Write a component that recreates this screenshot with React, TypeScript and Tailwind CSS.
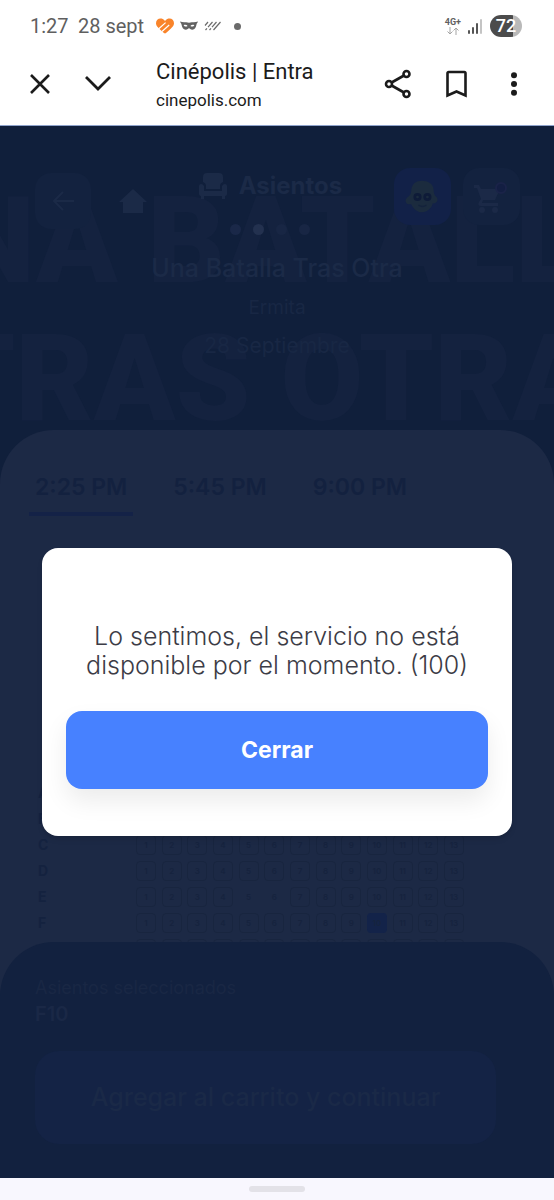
import { useState } from 'react'
import type { FC } from 'react'

const SHOWTIMES = ['2:25 PM', '5:45 PM', '9:00 PM']
const ROWS = ['A', 'B', 'C', 'D', 'E', 'F', 'G']
const SEATS = Array.from({ length: 13 }, (_, i) => i + 1)
const ACCESSIBLE = ['E5', 'E6']

const StatusBar: FC = () => (
  <div className="flex h-[52px] items-center justify-between pl-[30px] pr-8 text-xl text-[#5f5f5f]">
    <div className="flex items-center">
      <span className="w-12">1:27</span>
      <span>28 sept</span>
      <svg className="ml-3 h-4 w-[18px]" viewBox="0 0 18 16">
        <path d="M9 3C7.500 1 6 .5 4.500.5 2 .5 0 2.500 0 5.200c0 3 3 5.300 8 9.800q1 .8 2 0c5-4.500 8-6.800 8-9.800C18 2.500 16 .5 13.500.5 12 .5 10.500 1 9 3Z" fill="#f9842a" />
        <path d="M2.500 11 9.600 4.600M6 13.500 13.200 7" fill="none" stroke="#fff" strokeWidth="1.200" />
      </svg>
      <svg className="ml-1.5 h-[10px] w-[18px]" viewBox="0 0 18 10" fill="#626262">
        <path
          fillRule="evenodd"
          d="M0 .6c2.300 1 4.500.700 6.200.700 1.100 0 1.900.5 2.800.5s1.700-.5 2.800-.5c1.700 0 3.900.3 6.200-.7-.3 1.200-1.200 1.500-1.500 3-.5 3-1.800 5.100-4.200 5.100-1.900 0-2.400-1.500-3.300-1.500S7.600 8.700 5.700 8.700c-2.400 0-3.700-2.100-4.200-5.100C1.200 2.100.3 1.800 0 .6Zm3.600 3.600c.8 1.600 2.700 1.800 4 .7-.9-1.300-2.700-1.500-4-.7Zm6.800.7c1.300 1.100 3.200.9 4-.7-1.300-.8-3.100-.6-4 .7Z"
        />
      </svg>
      <svg className="ml-1.5 h-[10px] w-[18px]" viewBox="0 0 18 10" fill="none" stroke="#6b6b6b" strokeWidth="1.200">
        <path d="M1 4.500 4 1M1.500 9 3 7.300M4 6.200 8.500 1M5.500 9 7 7.300M8 6.200 12.500 1M9.500 9 16.500 1" />
      </svg>
      <span className="ml-3 size-[7px] rounded-full bg-[#6b6b6b]" />
    </div>
    <div className="flex items-center gap-[7px]">
      <div className="flex flex-col items-center">
        <span className="text-[9px] font-bold leading-[10px]">4G+</span>
        <svg className="h-2 w-3" viewBox="0 0 12 8" fill="none" stroke="#a5a5a5">
          <path d="M3 0v7M.5 4.500 3 7l2.500-2.500M9 8V1M6.500 3.500 9 1l2.500 2.500" />
        </svg>
      </div>
      <svg className="h-[15px] w-[15px]" viewBox="0 0 15 15" fill="#555">
        <rect x="0" y="11" width="2" height="4" rx="1" />
        <rect x="4" y="8" width="2" height="7" rx="1" />
        <rect x="8" y="4" width="2" height="11" rx="1" />
        <rect x="12" y="0" width="2" height="15" rx="1" fill="#c4c4c4" />
      </svg>
      <div className="flex h-[22px] w-8 items-center justify-center rounded-full bg-linear-to-r from-[#4b4b4b] from-72% to-[#b9b9b9] to-72% text-lg font-medium text-white">
        72
      </div>
    </div>
  </div>
)

const BrowserBar: FC = () => (
  <div className="flex h-[74px] items-center border-b border-[#8fa3cb] pb-[10px] pl-7 pr-7 text-[#1b1b1b]">
    <button aria-label="Cerrar pestaña" className="flex size-6 items-center justify-center">
      <svg className="size-5" viewBox="0 0 20 20" fill="none" stroke="currentColor" strokeWidth="2.600">
        <path d="M1 1 19 19M19 1 1 19" />
      </svg>
    </button>
    <button aria-label="Minimizar" className="ml-8 flex h-6 w-7 items-center justify-center">
      <svg className="h-[15px] w-[26px]" viewBox="0 0 26 15" fill="none" stroke="currentColor" strokeWidth="2.800">
        <path d="M1 1 13 13 25 1" />
      </svg>
    </button>
    <div className="ml-11 flex-1">
      <p className="text-[22px] leading-8">Cinépolis | Entra</p>
      <p className="text-[17px] leading-6">cinepolis.com</p>
    </div>
    <div className="flex items-center gap-[34px]">
      <button aria-label="Compartir">
        <svg className="h-[30px] w-7" viewBox="0 0 28 30" fill="none" stroke="currentColor" strokeWidth="2.600">
          <circle cx="5" cy="15" r="3" />
          <circle cx="22.500" cy="5" r="3" />
          <circle cx="22.500" cy="25" r="3" />
          <path d="M7.600 13.500 20 6.500M7.600 16.500 20 23.500" />
        </svg>
      </button>
      <button aria-label="Guardar">
        <svg className="h-7 w-[22px]" viewBox="0 0 22 28" fill="none" stroke="currentColor" strokeWidth="2.600">
          <path d="M1.500 3.200Q1.500 2 2.700 2H18.300Q19.500 2 19.500 3.200V25.500L10.500 21.500 1.500 25.500Z" />
        </svg>
      </button>
      <button aria-label="Más opciones">
        <svg className="h-6 w-6" viewBox="0 0 24 24" fill="currentColor">
          <circle cx="12" cy="3.300" r="3" />
          <circle cx="12" cy="12" r="3" />
          <circle cx="12" cy="20.700" r="3" />
        </svg>
      </button>
    </div>
  </div>
)

// Oversized movie title printed behind the header
const Poster: FC = () => (
  <div
    aria-hidden="true"
    className="absolute inset-0 overflow-hidden whitespace-pre pt-[46px] pr-5 font-['Roboto'] text-[120px] font-black leading-[138px] text-[#14223f]"
  >
    <p className="flex justify-center">UNA BATALLA</p>
    <p className="flex justify-center">TRAS OTRA</p>
  </div>
)

const MovieHeader: FC = () => (
  <header className="relative pt-[42px] pb-[70px] text-[#1b2a47]">
    <Poster />
    <div className="relative flex h-[68px] items-start justify-between pl-[35px] pr-[34px]">
      <div className="flex h-[66px] items-center gap-7">
        <button aria-label="Regresar" className="flex size-14 items-center justify-center rounded-2xl bg-[#13223f]">
          <svg className="h-5 w-[22px]" viewBox="0 0 22 20" fill="none" stroke="currentColor" strokeWidth="2">
            <path d="M22 10H2M11 1 2 10l9 9" />
          </svg>
        </button>
        <a href="#inicio" aria-label="Inicio">
          <svg className="h-6 w-7" viewBox="0 0 28 24" fill="currentColor">
            <path d="M14 0 28 13H24V24H4V13H0Z" />
          </svg>
        </a>
      </div>
      <div className="flex flex-col items-center gap-6 pt-1">
        <div className="flex h-7 items-center gap-3">
          <svg className="h-[26px] w-7" viewBox="0 0 28 26" fill="currentColor">
            <path d="M4 9V4q0-4 4-4H20q4 0 4 4V9q-3 1-3 4v3H7v-3q0-3-3-4Z" />
            <path d="M0 13q0-2 2-2t3 2v5H23v-5q1-2 3-2t2 2v8q0 2-2 2v3H23V23H5v3H2V23q-2 0-2-2Z" />
          </svg>
          <h1 className="text-2xl font-bold">Asientos</h1>
        </div>
        <div className="flex gap-3">
          <span className="size-[11px] rounded-full bg-[#1a2848]" />
          <span className="size-[11px] rounded-full bg-[#23314f]" />
          <span className="size-[11px] rounded-full bg-[#182644]" />
          <span className="size-[11px] rounded-full bg-[#182644]" />
        </div>
      </div>
      <div className="flex gap-3">
        <button aria-label="Perfil" className="flex size-[57px] items-center justify-center rounded-2xl bg-[#122148]">
          <svg className="size-9" viewBox="0 0 40 40" fill="#1b2b3e">
            <path d="M8 14C8 5 14 2 20 2s13 3 13 11c0 3 1 5 3 7 3 3 0 8-4 7-1 5-6 10-12 10S10 32 8 28c-5 1-8-3-5-7 3-2 5-4 5-7Z" />
            <circle cx="15" cy="20" r="4.500" fill="#0e1b38" />
            <circle cx="26" cy="20" r="4.500" fill="#0e1b38" />
            <circle cx="15" cy="20" r="1.500" />
            <circle cx="26" cy="20" r="1.500" />
            <path d="M16 29q4.500 3 9 0" fill="none" stroke="#14233c" strokeWidth="1.500" />
          </svg>
        </button>
        <button aria-label="Carrito" className="flex size-[57px] items-center justify-center rounded-2xl bg-[#13223f]">
          <svg className="h-8 w-[34px]" viewBox="0 0 34 32" fill="#1b2947">
            <path d="M0 4H5L7 8H26L21 19H9L8 22H24V25H7Q3 25 5 21L7 18 3 7H0Z" />
            <circle cx="8" cy="29" r="3" />
            <circle cx="21" cy="29" r="3" />
            <circle cx="27" cy="7" r="5" fill="#131e42" stroke="#1a2348" strokeWidth="2" />
          </svg>
        </button>
      </div>
    </div>
    <div className="relative text-center">
      <h2 className="mt-4 text-[25px] leading-8 font-medium">Una Batalla Tras Otra</h2>
      <p className="mt-3 text-[19px] leading-6 text-[#182744]">Ermita</p>
      <p className="mt-3 text-[21px] leading-7 text-[#182744]">28 Septiembre</p>
    </div>
  </header>
)

const SeatMap: FC = () => (
  <div className="min-h-0 flex-1 overflow-hidden pt-[267px]">
    <div className="flex flex-col gap-1.5">
      {ROWS.map((row) => (
        <div key={row} className="flex h-5 shrink-0 items-center pl-[38px]">
          <span className="w-[98px] text-sm font-bold text-[#14223f]">{row}</span>
          <div className="flex w-[328px] justify-between">
            {SEATS.map((n) => {
              const id = `${row}${n}`
              let look = 'border border-[#18253f]'
              if (id === 'F10') look = 'bg-[#132349]'
              else if (ACCESSIBLE.includes(id)) look = ''
              return (
                <button
                  key={id}
                  aria-label={`Asiento ${id}`}
                  className={`size-5 rounded-sm text-[8px] font-semibold leading-none text-[#16233e] ${look}`}
                >
                  {n}
                </button>
              )
            })}
          </div>
        </div>
      ))}
    </div>
  </div>
)

const ErrorDialog: FC<{ onClose: () => void }> = ({ onClose }) => (
  <div className="absolute inset-0 flex items-center justify-center px-[42px] pt-20">
    <div
      role="alertdialog"
      aria-modal="true"
      aria-labelledby="error-message"
      className="flex w-full flex-col gap-[31px] rounded-2xl bg-white px-5 pt-[74px] pb-[47px] shadow-md"
    >
      <p id="error-message" className="text-center text-[25px] leading-[29px] font-light text-[#3c3c46]">
        Lo sentimos, el servicio no está disponible por el momento. (100)
      </p>
      <button
        onClick={onClose}
        className="mx-1 h-[78px] rounded-2xl bg-[#4781ff] text-[23px] font-bold text-white shadow-[0_12px_24px_rgba(0,0,0,0.08)]"
      >
        Cerrar
      </button>
    </div>
  </div>
)

export default function App() {
  const [showtime, setShowtime] = useState(SHOWTIMES[0])
  const [hasError, setHasError] = useState(true)

  return (
    <div className="flex h-screen flex-col bg-white font-['Roboto',sans-serif]">
      <StatusBar />
      <BrowserBar />

      <main className="relative flex min-h-0 flex-1 flex-col bg-[#101f3b] font-['Inter',sans-serif]">
        <MovieHeader />

        <section className="relative flex min-h-0 flex-1 flex-col rounded-t-[54px] bg-[#1c2945]">
          <nav className="flex gap-[34px] px-[29px] pt-9">
            {SHOWTIMES.map((time) => (
              <button
                key={time}
                onClick={() => setShowtime(time)}
                className={`h-[50px] border-b-4 px-1.5 pb-1 text-[23px] font-semibold text-[#13213f] ${
                  time === showtime ? 'border-[#142247]' : 'border-transparent'
                }`}
              >
                {time}
              </button>
            ))}
          </nav>

          <SeatMap />

          <footer className="rounded-t-[54px] bg-[#12213f] pt-[34px] pr-[58px] pb-[34px] pl-[35px]">
            <p className="text-lg leading-6 text-[#192744]">Asientos seleccionados</p>
            <p className="text-xl font-semibold text-[#1a2846]">F10</p>
            <button className="mt-[23px] h-[93px] w-full rounded-3xl bg-[#142345] text-[25px] font-medium text-[#1a2947]">
              Agregar al carrito y continuar
            </button>
          </footer>
        </section>

        {hasError && <ErrorDialog onClose={() => setHasError(false)} />}
      </main>

      <div className="flex h-[22px] items-center justify-center bg-[#f8f7fe]">
        <span className="h-1.5 w-14 rounded-full bg-[#e3e2e8]" />
      </div>
    </div>
  )
}
